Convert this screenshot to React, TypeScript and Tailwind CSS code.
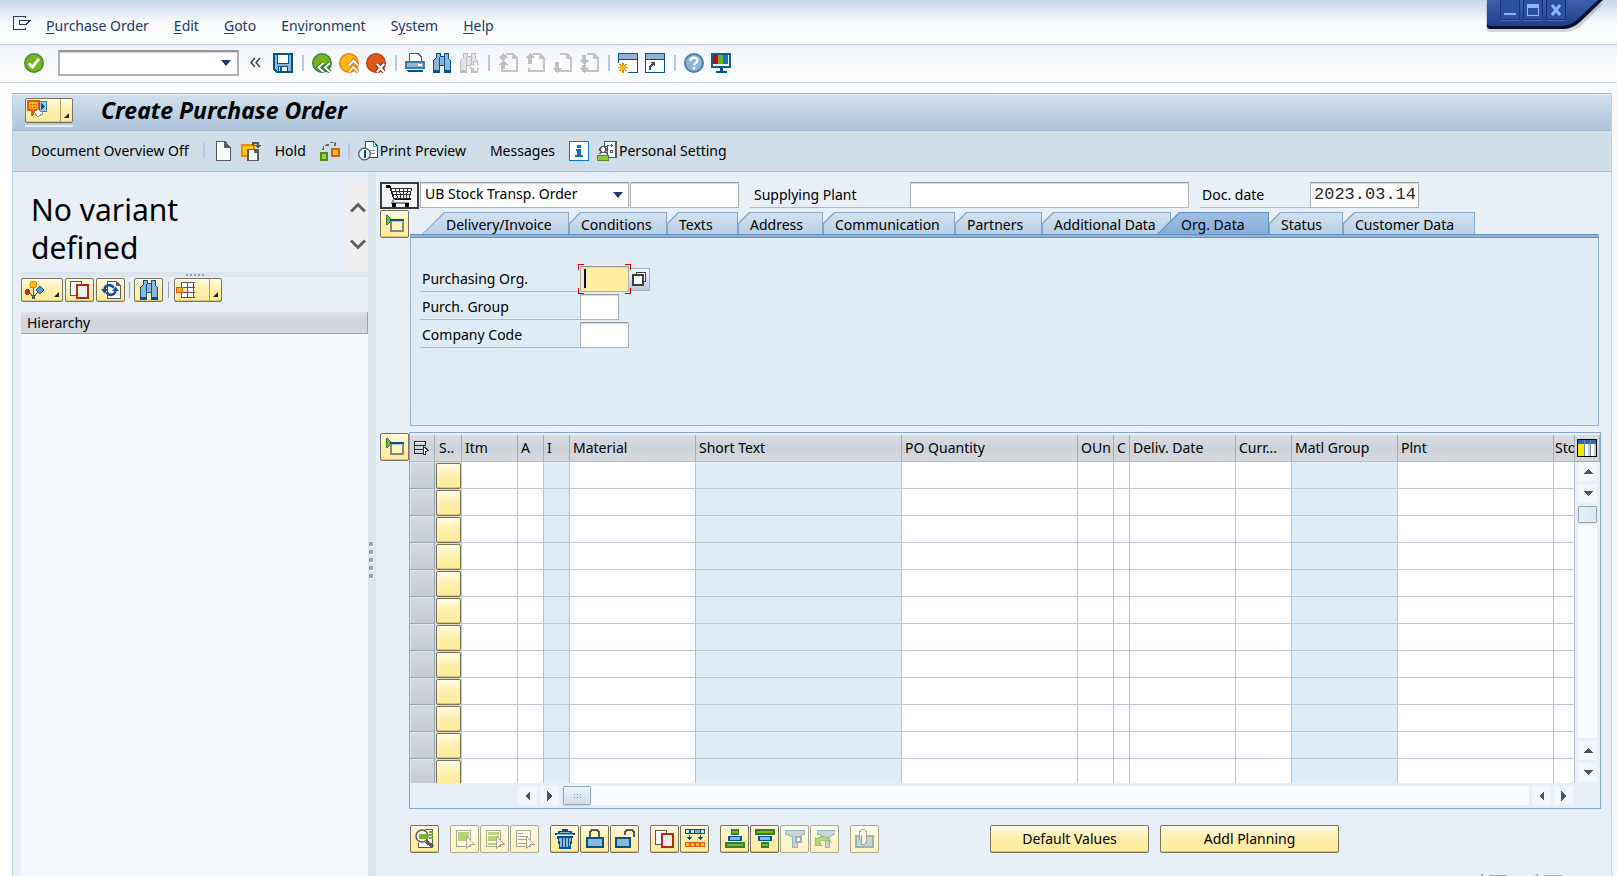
import React from 'react';

type IconProps = { children: React.ReactNode; smooth?: boolean; faded?: boolean };

function Icon({ children, smooth, faded }: IconProps) {
  return (
    <svg
      viewBox="0 0 20 20"
      className={faded ? 'size-5 shrink-0 opacity-50' : 'size-5 shrink-0'}
      shapeRendering={smooth ? 'auto' : 'crispEdges'}
      fill="none"
      aria-hidden="true"
    >
      {children}
    </svg>
  );
}

const BLUE = '#00568c';
const SKY = '#91b5d8';
const INK = '#5a5a5a';

/* ---------- system toolbar icons ---------- */

const OkIcon = () => (
  <Icon smooth>
    <circle cx="10" cy="10" r="9.2" fill="#76b31c" stroke="#4a8f3a" strokeWidth="1.6" />
    <path d="M4.8 10.4l3.6 3.8 6.6-8.4" stroke="#fff" strokeWidth="2.8" />
  </Icon>
);
const SaveIcon = () => (
  <Icon>
    <path d="M1 1h18v18H4l-3-3z" fill={SKY} stroke={BLUE} strokeWidth="1.5" />
    <rect x="4.5" y="1" width="11" height="9" fill="#fff" stroke={BLUE} />
    <rect x="5.5" y="13.5" width="9" height="5" fill="#fff" stroke={BLUE} />
    <rect x="7" y="14" width="2" height="5" fill={BLUE} />
  </Icon>
);
const BackIcon = () => (
  <Icon smooth>
    <circle cx="10" cy="10" r="9.2" fill="#76b31c" stroke="#3c8540" strokeWidth="1.6" />
    <path d="M11.5 10l-5 4.5 5 4.5M18 10l-5 4.5 5 4.5" stroke="#2f7434" strokeWidth="4" />
    <path d="M11.5 10l-5 4.5 5 4.5M18 10l-5 4.5 5 4.5" stroke="#fff" strokeWidth="2" />
  </Icon>
);
const ExitIcon = () => (
  <Icon smooth>
    <circle cx="10" cy="10" r="9.2" fill="#fdbb12" stroke="#e98300" strokeWidth="1.6" />
    <path d="M10 12.5l4.5-5 4.5 5M10 19l4.5-5 4.5 5" stroke="#e0700a" strokeWidth="4" />
    <path d="M10 12.5l4.5-5 4.5 5M10 19l4.5-5 4.5 5" stroke="#fff" strokeWidth="2" />
  </Icon>
);
const CancelIcon = () => (
  <Icon smooth>
    <circle cx="10" cy="10" r="9.2" fill="#da5a1b" stroke="#b8431c" strokeWidth="1.6" />
    <path d="M11 11l7 8M18 11l-7 8" stroke="#a62f16" strokeWidth="4.5" />
    <path d="M11 11l7 8M18 11l-7 8" stroke="#fff" strokeWidth="2.2" />
  </Icon>
);
const PrintIcon = () => (
  <Icon>
    <path d="M4.5 9V.5H13L16.5 4V9" fill="#fff" stroke={INK} />
    <rect x="1" y="9" width="18" height="6" fill={SKY} stroke="#3c7cae" strokeWidth="1.5" />
    <rect x="13" y="11" width="4" height="2" fill="#fff" />
    <path d="M2 17h16v2H3z" fill={BLUE} />
  </Icon>
);
const Binoculars = ({ dark, light }: { dark: string; light: string }) => (
  <>
    <path d="M4 .5h4v3h4v-3h4V5l2.500 2.500V19h-6v-7h-5v7h-6V7.500L4 5z" fill={light} stroke={dark} />
    <path d="M7.500 4v8M12.500 4v8" stroke={dark} />
    <path d="M2 17.500h5M13 17.500h5" stroke={dark} strokeWidth="2" />
  </>
);
const FindIcon = () => (
  <Icon>
    <Binoculars dark={BLUE} light={SKY} />
  </Icon>
);
const FindNextIcon = () => (
  <Icon>
    <Binoculars dark="#bdbdbd" light="#e3e3e3" />
    <path d="M11 11h3V8h4v3h2v4h-2v3h-4v-3h-3z" fill="#f5f5f5" stroke="#bdbdbd" />
  </Icon>
);
const PageIcon = ({ dir }: { dir: 'first' | 'up' | 'down' | 'last' }) => (
  <Icon>
    <path d="M8 1h7l4 4v13H4v-3M15 1v4h4" stroke="#c4c4c4" strokeWidth="1.5" fill="#fafafa" />
    {dir === 'first' && <path d="M5 0L0 5h3v2h4V5h3zM5 7l-5 5h3v4h4v-4h3z" fill="#c0c0c0" />}
    {dir === 'up' && <path d="M5 0L0 5h3v6h4V5h3z" fill="#c0c0c0" />}
    {dir === 'down' && <path d="M5 20L0 15h3V9h4v6h3z" fill="#c0c0c0" />}
    {dir === 'last' && <path d="M5 12L0 7h3V2h4v5h3zM5 20L0 15h3v-3h4v3h3z" fill="#c0c0c0" />}
  </Icon>
);
const WindowBase = () => (
  <>
    <rect x=".5" y=".5" width="19" height="19" fill="#fff" stroke={BLUE} />
    <rect x="1" y="1" width="18" height="5" fill={SKY} />
    <path d="M0 6.5h20" stroke={BLUE} />
  </>
);
const SessionIcon = () => (
  <Icon>
    <WindowBase />
    <path d="M0 10h10v10H0z" fill="#fff" />
    <path d="M5 9.5v10M0 14.5h10M1.500 11l7 7M8.500 11l-7 7" stroke="#ee8a00" strokeWidth="1.500" />
    <circle cx="5" cy="14.5" r="3" fill="#fdb913" />
  </Icon>
);
const ShortcutIcon = () => (
  <Icon>
    <WindowBase />
    <path d="M5 17c0-4 1-6 4-6" stroke="#4a4a4a" strokeWidth="2" />
    <path d="M5 9h5v5z" fill="#4a4a4a" />
  </Icon>
);
const HelpIcon = () => (
  <Icon smooth>
    <circle cx="10" cy="10" r="9" fill="#8fb4d9" stroke="#4a80ae" strokeWidth="2" />
    <path d="M6.5 8c0-4.500 7-4.500 7-.5 0 2.500-3.500 2.300-3.500 5" stroke="#fff" strokeWidth="2.2" />
    <rect x="8.8" y="14" width="2.4" height="2.4" fill="#fff" />
  </Icon>
);
const LayoutIcon = () => (
  <Icon>
    <rect x="1" y="1" width="18" height="13" fill="#fff" stroke="#0b6196" strokeWidth="1.5" />
    <rect x="2" y="2" width="5" height="9" fill="#d4000f" />
    <rect x="7" y="2" width="5" height="9" fill="#6eb41c" />
    <rect x="12" y="2" width="5" height="9" fill="#0a7ac8" />
    <path d="M9 15h3v3h4v2H5v-2h4z" fill={BLUE} />
  </Icon>
);

/* ---------- application toolbar icons ---------- */

const ServicesIcon = () => (
  <Icon>
    <path d="M1 1h11v8l-4 1-3 6V10H1z" fill="#fdb913" stroke="#e2571c" strokeWidth="1.5" />
    <path d="M3 4.500h7M3 7.500h7" stroke="#e2571c" strokeDasharray="2 1" />
    <rect x="12.5" y="1.5" width="7" height="10" fill="#a9c8e4" stroke="#337ab0" />
    <path d="M14 3l4 3.500-4 3.500z" fill="#00568c" />
    <path d="M7 12l4-3 4 3v2l-4 3z" fill="#fff" stroke="#8a8a8a" />
  </Icon>
);
const NewIcon = () => (
  <Icon>
    <path d="M3.5.5h8.500l5 5.500v13.500H3.500z" fill="#fff" stroke={INK} />
    <path d="M11 0v7h7z" fill={INK} />
  </Icon>
);
const OtherOrderIcon = () => (
  <Icon>
    <rect x="1" y="4" width="12" height="11" fill="#fdc913" stroke="#ee8a00" strokeWidth="2" />
    <path d="M7 8.5h10v11H7z" fill="#fff" stroke={INK} strokeWidth="1.5" />
    <path d="M13 8h5v4h-5z" fill={INK} />
    <path d="M12 5V2h5v2" stroke={INK} strokeWidth="1.5" />
    <path d="M13 4h7l-3.500 3.500z" fill={INK} />
  </Icon>
);
const CheckIcon = () => (
  <Icon>
    <rect x="1" y="12" width="6" height="7" fill="#9fd22c" stroke="#4b8c25" strokeWidth="2" />
    <rect x="12" y="8" width="7" height="7" fill="#fdc913" stroke="#dd5a16" strokeWidth="2" />
    <path d="M3 9c0-4 2-5 6-5M15 5V1.500h-5" stroke="#6a6a6a" strokeWidth="1.500" strokeDasharray="4 1" />
  </Icon>
);
const PreviewIcon = () => (
  <Icon>
    <path d="M7.500.5h8l4 4.500v11.500h-12z" fill="#fff" stroke={BLUE} />
    <path d="M15.500 1v4.500h4M12 9.500h5M12 12.500h5" stroke="#5f94bf" />
    <circle cx="6.5" cy="13" r="5.8" fill="#e9f1f7" stroke={INK} strokeWidth="1.300" shapeRendering="auto" />
    <path d="M6.500 9v8" stroke={BLUE} strokeWidth="2" />
  </Icon>
);
const InfoIcon = () => (
  <Icon>
    <rect x=".5" y=".5" width="19" height="19" fill="#fff" stroke="#0a7ac8" strokeWidth="1.5" />
    <path d="M8 4h4v3H8zM7 8h5v6h2v2H6v-2h2v-4H7z" fill="#0a72b8" />
  </Icon>
);
const PersonIcon = () => (
  <Icon>
    <path d="M7.500.5h12v16h-9V5h-3z" fill="#fff" stroke={INK} />
    <path d="M19 1v16" stroke={INK} strokeWidth="2" />
    <path d="M10 4.500h2M13 4.500h3M14.500 3v3M13.500 9.500h2v2h-2z" stroke={INK} />
    <circle cx="6" cy="8.5" r="3" fill="#fff" stroke={INK} strokeWidth="1.5" />
    <path d="M2 13l3-2h3l3 2" stroke={INK} fill="#fff" />
    <path d="M.500 14.500h11v5H.500z" fill="#8cc832" stroke="#4b8c25" />
  </Icon>
);

/* ---------- panel icons ---------- */

const NodesIcon = () => (
  <Icon>
    <path d="M3 12c3 0 6 3 6 7M16 12c-3 0-6 3-6 7M9.500 5v14" stroke={INK} />
    <circle cx="9.5" cy="4.5" r="3.5" fill="#fdb913" stroke="#ee8a00" />
    <circle cx="3.5" cy="12" r="2.5" fill="#d8331c" stroke="#a62f16" />
    <path d="M16 6l4 4-4 4-4-4z" fill="#5f9cc8" stroke={BLUE} />
  </Icon>
);
const CopyIcon = () => (
  <Icon>
    <path d="M.5 1.500h11v14H.500z" fill="#fff" stroke={INK} />
    <rect x="7" y="4.5" width="11" height="13" fill="#eee" stroke="#b42a14" strokeWidth="2" />
  </Icon>
);
const RefreshIcon = () => (
  <Icon>
    <path d="M6.500 1.500h9l4 4v13h-13z" fill="#fff" stroke={INK} />
    <path d="M15 1v5h5z" fill={INK} />
    <g shapeRendering="auto">
      <path d="M3.500 10c0-5.500 7-6.500 9-2M14.500 10c0 5.500-7 6.500-9 2" stroke="#1d4f9c" strokeWidth="2.500" />
      <path d="M0 9h7l-3.500 4.500zM11 11h7l-3.500-4.500z" fill="#1d4f9c" />
    </g>
  </Icon>
);
const GridIcon = () => (
  <Icon>
    <path d="M5.500 2v5M5.500 13v5M5 2.500h14M5 7.500h14M5 12.500h14M5 17.500h14M11.500 2v16M17.500 2v16" stroke={INK} />
    <path d="M6 3h5v4H6zM12 3h5v4h-5zM12 8h5v4h-5zM6 13h5v4H6zM12 13h5v4h-5z" fill="#fff" />
    <rect x=".5" y="7.500" width="6" height="5" fill="#fdb913" stroke="#e2571c" />
  </Icon>
);
const CartIcon = () => (
  <svg viewBox="0 0 30 22" className="h-[22px] w-[30px]" shapeRendering="crispEdges" fill="none" aria-hidden="true">
    <path d="M1 2h4l4 12h17" stroke="#000" strokeWidth="1.5" />
    <rect x="1" y="0" width="4" height="3" fill="#000" />
    <path d="M6 3h21l-3 10H9z" fill="#fff" stroke="#333" />
    <path d="M10.500 3l2 10M14.500 3l1 10M18.500 3v10M22.500 3l-1 10M7 6.500h19M8 9.500h17" stroke="#333" />
    <path d="M9 14l-2 4h17" stroke="#8a8a8a" strokeWidth="1.5" />
    <rect x="7" y="18" width="4" height="4" fill="#000" />
    <rect x="20" y="18" width="4" height="4" fill="#000" />
  </svg>
);
const ExpandIcon = () => (
  <Icon>
    <path d="M1.500 1.500h1l4 4v1l-4 4h-1z" fill="#7ab82a" stroke="#3c7c2c" />
    <path d="M6 6h12v11H6z" fill="#fff3b8" stroke="#858585" strokeWidth="1.5" />
    <path d="M5 6h14" stroke={BLUE} strokeWidth="2" />
    <path d="M7 7.500h11" stroke="#a9c8e4" />
  </Icon>
);
const SelectAllIcon = () => (
  <svg viewBox="0 0 16 16" className="size-4" shapeRendering="crispEdges" fill="none" aria-hidden="true">
    <path d="M.5 1.500h11v4H.500zM.500 5.500v8H9M.500 9.500H9" stroke="#2b2b45" />
    <path d="M1 2h10v1H1z" fill="#fff" />
    <path d="M9.500 6.500l5 4-3 1v3h-2z" fill="#fff" stroke="#2b2b45" />
  </svg>
);
const ConfigIcon = () => (
  <svg viewBox="0 0 20 18" className="h-[18px] w-5" shapeRendering="crispEdges" aria-hidden="true">
    <rect x="0" y="0" width="20" height="18" fill="#000" />
    <rect x="1" y="1" width="18" height="16" fill="#fff" />
    <rect x="1" y="1" width="18" height="4" fill="#1e6fc0" />
    <rect x="1" y="5" width="6" height="12" fill="#ffe600" />
    <path d="M7 1h1v16H7zM13 1h1v16h-1z" fill="#6d8aa8" />
    <path d="M11 5h2v12h-2zM17 5h2v12h-2z" fill="#c7cdd6" />
  </svg>
);
const MatchesIcon = () => (
  <svg viewBox="0 0 14 14" className="size-3.5" shapeRendering="crispEdges" aria-hidden="true">
    <rect x="4" y="0" width="10" height="10" fill="#3d3d3d" />
    <rect x="5" y="1" width="8" height="8" fill="#fff" />
    <rect x="0" y="2" width="12" height="12" fill="#3d3d3d" />
    <rect x="2" y="4" width="8" height="8" fill="#fff" />
  </svg>
);

/* ---------- item toolbar icons ---------- */

const DetailIcon = () => (
  <Icon>
    <path d="M10 .5h7.500v18H3.500V14" fill="#fff" stroke={INK} />
    <path d="M14 3h4M14 6h4M14 9h4" stroke="#6fb01e" strokeWidth="2" />
    <circle cx="7" cy="7" r="6" fill="#fff" stroke={INK} strokeWidth="1.500" shapeRendering="auto" />
    <rect x="4" y="5" width="9" height="5" fill="#7ab82a" />
    <path d="M11 12l7 6" stroke={INK} strokeWidth="3.5" />
  </Icon>
);
const MarkIcon = ({ kind }: { kind: 'all' | 'block' | 'none' }) => (
  <Icon faded>
    <rect x="1.5" y="1.5" width="14" height="16" fill="#fff" stroke={INK} />
    {kind === 'all' && <path d="M3 3h11v9H3z" fill="#6fb01e" />}
    {kind === 'block' && <path d="M3 3h11v3H3zM3 7h11v5H3zM3 14h8v2H3z" fill="#6fb01e" />}
    {kind === 'none' && <path d="M3 4.500h5M3 7.500h10M3 10.500h10M3 14.500h8" stroke={INK} />}
    <path d="M11.500 7.500l8 8-4 .5-4 3.500z" fill="#fff" stroke={INK} />
  </Icon>
);
const TrashIcon = () => (
  <Icon>
    <path d="M7 0h6v2h4v2h3v2H0V4h3V2h4z" fill={BLUE} />
    <path d="M5 3h10M2 5h16" stroke={SKY} />
    <path d="M3 8h14l-2 11H5z" fill={SKY} stroke={BLUE} strokeWidth="1.5" />
    <path d="M7.500 9v9M10.500 9v9M13.500 9v9" stroke={BLUE} />
  </Icon>
);
const LockIcon = ({ open }: { open?: boolean }) => (
  <Icon>
    {open ? (
      <path d="M10 6V3l2-2h5l2 2v5" stroke={INK} strokeWidth="2" />
    ) : (
      <path d="M5 8V3l2-2h5l2 2v5" stroke={INK} strokeWidth="2" />
    )}
    <path d={open ? 'M1 9h14v9H1z' : 'M2 9h16v9H2z'} fill={SKY} stroke={BLUE} strokeWidth="1.5" />
  </Icon>
);
const RowsIcon = () => (
  <Icon>
    <rect x="0" y="0" width="20" height="5" fill={BLUE} />
    <path d="M1 1h3v3H1zM6 1h3v3H6zM16 1h3v3h-3z" fill="#cfe2f2" />
    <rect x="10" y="1" width="5" height="3" fill="#9b9b9b" />
    <path d="M2 8h5l-2.500 3zM13 8h5l-2.500 3z" fill={BLUE} />
    <path d="M4.500 6v3M15.500 6v3" stroke={BLUE} />
    <rect x="0" y="13" width="20" height="5" fill="#e2571c" />
    <path d="M1 14h3v3H1zM6 14h3v3H6zM11 14h3v3h-3zM16 14h3v3h-3z" fill="#fdc913" />
  </Icon>
);
const SortIcon = ({ down }: { down?: boolean }) => (
  <Icon>
    <rect x={down ? 1 : 6.5} y="1" width={down ? 18 : 7} height="4" fill="#7ab82a" stroke="#3c7c2c" strokeWidth="1.5" />
    <rect x="4" y="7.5" width="12" height="4" fill={SKY} stroke={BLUE} strokeWidth="1.5" />
    <rect x={down ? 6.5 : 1} y="14" width={down ? 7 : 18} height="4" fill="#7ab82a" stroke="#3c7c2c" strokeWidth="1.5" />
  </Icon>
);
const FilterIcon = () => (
  <Icon faded>
    <path d="M.500 1h19v4l-7 3v10h-5V8l-7-3z" fill={SKY} stroke="#2f76ab" />
    <rect x="11" y="8" width="5" height="5" fill="#fff" stroke="#2f76ab" strokeWidth="1.500" />
  </Icon>
);
const FilterOffIcon = () => (
  <Icon faded>
    <path d="M2 1h18v4l-6 3v10h-4V8L2 5z" fill={SKY} stroke="#2f76ab" />
    <path d="M0 8v8h6l-2-3c3-2 8-2 12 0-3-6-10-7-14-3z" fill="#7ab82a" stroke="#3c7c2c" />
  </Icon>
);
const AttachIcon = () => (
  <Icon faded>
    <path d="M1 7h17v11H1z" fill={SKY} stroke="#2f76ab" strokeWidth="1.5" />
    <path d="M4.500 11V3l2-2.500h3l2 2.500v10l-2 2.500h-3v-10" stroke={INK} fill="#e8eff6" />
  </Icon>
);

/* ---------- building blocks ---------- */

const yellow =
  'flex items-center justify-center rounded-[2px] border border-[#77735f] bg-linear-to-b from-[#fffbe3] via-[#ffefaa] to-[#ffeb9b] shadow-[inset_0_-1px_0_#d8c67c]';
const yellowFaded =
  'flex items-center justify-center rounded-[2px] border border-[#aaa892] bg-linear-to-b from-[#fffdf0] via-[#fff6cd] to-[#fdf2c4]';
const field =
  'rounded-[1px] border border-[#adb1b3] border-t-[#96989a] bg-white shadow-[inset_0_2px_1px_-1px_#d4d6da] outline-none';

const Sep = () => <span className="ml-0.5 mr-px h-4 w-0.5 bg-[#b4cbe2]" />;
const Corner = () => (
  <span className="border-b-[5px] border-l-[5px] border-b-[#222] border-l-transparent" />
);

function ToolButton({ label, children }: { label: string; children: React.ReactNode }) {
  return (
    <button type="button" aria-label={label}>
      {children}
    </button>
  );
}

function Arrow({ dir, label }: { dir: 'up' | 'down' | 'left' | 'right'; label: string }) {
  const paths = {
    up: 'M5 2l5 5H0z',
    down: 'M5 7l5-5H0z',
    left: 'M2 5l5-5v10z',
    right: 'M7 5L2 0v10z',
  };
  return (
    <button type="button" aria-label={label} className="flex h-[19px] w-[19px] shrink-0 items-center justify-center bg-[#f3f6fa]">
      <svg viewBox="0 0 10 10" className="size-2.5" shapeRendering="crispEdges" aria-hidden="true">
        <path d={paths[dir]} fill="#43586c" />
      </svg>
    </button>
  );
}

/* ---------- page sections ---------- */

const menus: [string, string, string][] = [
  ['', 'P', 'urchase Order'],
  ['', 'E', 'dit'],
  ['', 'G', 'oto'],
  ['En', 'v', 'ironment'],
  ['S', 'y', 'stem'],
  ['', 'H', 'elp'],
];

function WindowControls() {
  const button =
    'flex h-5 w-5 items-center justify-center rounded-b-[2px] border border-t-0 border-[#16307a] bg-[#2c4fa0] shadow-[0_1px_0_#4a6cc0]';
  return (
    <div className="absolute right-[13px] top-0 h-[34px] w-[118px]">
      <svg viewBox="0 0 118 34" className="absolute inset-0 h-full w-full" aria-hidden="true">
        <defs>
          <linearGradient id="cap" x1="0" y1="0" x2="0" y2="1">
            <stop offset="0" stopColor="#3c60ae" />
            <stop offset="1" stopColor="#213f86" />
          </linearGradient>
        </defs>
        <path d="M0 4h117L97 24q-8 8-18 8H4q-4 0-4-4z" fill="#000" opacity=".15" />
        <path d="M1 0h116L94 22q-8 7-16 7H4q-3 0-3-3z" fill="#06102e" />
        <path d="M1 0h111L92 19q-8 7-16 7H5q-4 0-4-3z" fill="url(#cap)" />
      </svg>
      <div className="relative ml-3.5 flex gap-[3px]">
        <button type="button" aria-label="Minimize" className={button}>
          <svg viewBox="0 0 12 12" className="size-3" aria-hidden="true">
            <path d="M0 9h12v2H0z" fill="#8fb4ff" />
          </svg>
        </button>
        <button type="button" aria-label="Maximize" className={button}>
          <svg viewBox="0 0 12 12" className="size-3" shapeRendering="crispEdges" aria-hidden="true">
            <path d="M0 0h12v12H0zM1 4v7h10V4z" fillRule="evenodd" fill="#8fb4ff" />
          </svg>
        </button>
        <button type="button" aria-label="Close" className={button}>
          <svg viewBox="0 0 12 12" className="size-3" aria-hidden="true">
            <path d="M2 1l8 10M10 1L2 11" stroke="#8fb4ff" strokeWidth="3" />
          </svg>
        </button>
      </div>
    </div>
  );
}

function MenuBar() {
  return (
    <nav className="flex h-[45px] items-center border-b border-[#bdc9da] bg-linear-to-b from-[#c7d5e8] via-[#f8fafc] via-50% to-white pl-[13px] pt-2 text-[#22376a]">
      <button type="button" aria-label="Menu" className="mr-[15px] pb-1.5">
        <svg viewBox="0 0 18 14" className="h-3.5 w-[18px]" fill="none" shapeRendering="crispEdges" aria-hidden="true">
          <path d="M12.500 2V.5H.5v13h12V12" stroke="#22376a" />
          <path d="M6.500 4.500h10.500L13 8.500H6.500z" stroke="#22376a" />
        </svg>
      </button>
      <ul className="flex gap-[25px]">
        {menus.map(([a, b, c]) => (
          <li key={a + b + c}>
            <button type="button">
              {a}
              <span className="underline underline-offset-2">{b}</span>
              {c}
            </button>
          </li>
        ))}
      </ul>
    </nav>
  );
}

function SystemToolbar() {
  return (
    <div className="flex h-[38px] items-center gap-[7px] border-b border-[#c9d0de] bg-linear-to-b from-[#f0f4fa] to-white pb-0.5 pl-6">
      <ToolButton label="Enter"><OkIcon /></ToolButton>
      <div className="relative ml-[7px]">
        <select aria-label="Command field" className={`${field} block h-[26px] w-[181px] appearance-none border-2`}>
          <option></option>
        </select>
        <svg viewBox="0 0 10 6" className="pointer-events-none absolute right-2 top-2.5 h-1.5 w-2.5" aria-hidden="true">
          <path d="M0 0h10L5 6z" fill="#22376a" />
        </svg>
      </div>
      <button type="button" aria-label="Collapse" className="ml-1 mr-[5px]">
        <svg viewBox="0 0 11 11" className="size-[11px]" fill="none" stroke="#444" strokeWidth="1.5" aria-hidden="true">
          <path d="M5 1L1 5.500 5 10M10 1L6 5.500 10 10" />
        </svg>
      </button>
      <ToolButton label="Save"><SaveIcon /></ToolButton>
      <Sep />
      <ToolButton label="Back"><BackIcon /></ToolButton>
      <ToolButton label="Exit"><ExitIcon /></ToolButton>
      <ToolButton label="Cancel"><CancelIcon /></ToolButton>
      <Sep />
      <ToolButton label="Print"><PrintIcon /></ToolButton>
      <ToolButton label="Find"><FindIcon /></ToolButton>
      <ToolButton label="Find next"><FindNextIcon /></ToolButton>
      <Sep />
      <ToolButton label="First page"><PageIcon dir="first" /></ToolButton>
      <ToolButton label="Previous page"><PageIcon dir="up" /></ToolButton>
      <ToolButton label="Next page"><PageIcon dir="down" /></ToolButton>
      <ToolButton label="Last page"><PageIcon dir="last" /></ToolButton>
      <Sep />
      <ToolButton label="New session"><SessionIcon /></ToolButton>
      <ToolButton label="Create shortcut"><ShortcutIcon /></ToolButton>
      <Sep />
      <ToolButton label="Help"><HelpIcon /></ToolButton>
      <ToolButton label="Customize layout"><LayoutIcon /></ToolButton>
    </div>
  );
}

function TitleBar() {
  return (
    <header className="flex h-[38px] items-center border-y border-b-[#a3b8cf] border-t-[#9dadc4] bg-linear-to-b from-[#d2e1ed] to-[#adc4dc] pl-3 shadow-[inset_0_1px_0_#e8f0f6]">
      <div className="border-b-2 border-[#e9f1f7] pb-0.5">
        <button type="button" aria-label="Services for object" className={`${yellow} h-[25px] w-12 !justify-start pl-px`}>
          <ServicesIcon />
          <span className="ml-auto flex h-full w-3 items-end justify-end border-l border-[#a89f70] p-1 pr-[3px]">
            <Corner />
          </span>
        </button>
      </div>
      <h1 className="ml-7 pb-1 font-['Noto_Sans',sans-serif] text-[23px] font-bold italic leading-7 text-black">
        Create Purchase Order
      </h1>
    </header>
  );
}

function AppToolbar() {
  return (
    <div className="flex h-[41px] items-center border-b border-[#a9bccc] bg-[#cfdde8] pl-[18px] text-black">
      <button type="button">Document Overview Off</button>
      <span className="ml-3.5 mr-2 h-4 w-0.5 bg-[#b0cae2]" />
      <ToolButton label="Create"><NewIcon /></ToolButton>
      <span className="w-2" />
      <ToolButton label="Other purchase order"><OtherOrderIcon /></ToolButton>
      <button type="button" className="mx-3.5">Hold</button>
      <ToolButton label="Check"><CheckIcon /></ToolButton>
      <span className="mx-2 h-4 w-0.5 bg-[#b0cae2]" />
      <button type="button" className="flex items-center gap-0.5"><PreviewIcon />Print Preview</button>
      <button type="button" className="ml-6 mr-3.5">Messages</button>
      <ToolButton label="Information"><InfoIcon /></ToolButton>
      <button type="button" className="ml-2 flex items-center gap-0.5"><PersonIcon />Personal Setting</button>
    </div>
  );
}

function OverviewPane() {
  return (
    <aside className="flex w-[355px] shrink-0 flex-col pl-2">
      <div className="flex h-[100px] justify-between">
        <p className="w-60 pl-2.5 pt-[19px] text-[30px] leading-[38px]">No variant defined</p>
        <div className="mt-2 flex w-[21px] flex-col items-center gap-[26px] bg-[#efefef] pt-[21px]">
          <button type="button" aria-label="Scroll up">
            <svg viewBox="0 0 16 12" className="h-3 w-4" fill="none" aria-hidden="true">
              <path d="M1 10.500l7-7 7 7" stroke="#606060" strokeWidth="3" />
            </svg>
          </button>
          <button type="button" aria-label="Scroll down">
            <svg viewBox="0 0 16 12" className="h-3 w-4" fill="none" aria-hidden="true">
              <path d="M1 1.500l7 7 7-7" stroke="#606060" strokeWidth="3" />
            </svg>
          </button>
        </div>
      </div>
      <div className="flex h-[5px] items-center justify-center gap-0.5 bg-[#dbe5eb]">
        {[0, 1, 2, 3, 4].map((i) => (
          <span key={i} className="h-0.5 w-0.5 bg-[#93a3b3]" />
        ))}
      </div>
      <div className="flex items-center gap-0.5 pt-px">
        <button type="button" aria-label="Select variant" className={`${yellow} h-6 w-[42px] !justify-start pl-0.5`}>
          <NodesIcon />
          <span className="ml-auto flex self-end p-1 pr-[3px]"><Corner /></span>
        </button>
        <button type="button" aria-label="Copy" className={`${yellow} h-6 w-[29px]`}><CopyIcon /></button>
        <button type="button" aria-label="Refresh" className={`${yellow} h-6 w-[29px]`}><RefreshIcon /></button>
        <span className="mx-0.5 h-4 w-px bg-[#9aa2aa]" />
        <button type="button" aria-label="Find" className={`${yellow} h-6 w-[29px]`}><FindIcon /></button>
        <span className="mx-[3px] h-4 w-px bg-[#9aa2aa]" />
        <button type="button" aria-label="Layout" className={`${yellow} h-6 w-12 !justify-start pl-px`}>
          <GridIcon />
          <span className="ml-auto flex h-full w-3 items-end justify-end border-l border-[#a89f70] p-1 pr-[3px]">
            <Corner />
          </span>
        </button>
      </div>
      <h2 className="mt-2.5 h-[22px] border-b border-r border-[#9ba3ad] bg-linear-to-b from-[#dde0e5] via-[#cfd3da] to-[#d4d8de] pl-1.5 leading-[21px]">
        Hierarchy
      </h2>
      <div className="flex-1 bg-[#f6faff]" />
    </aside>
  );
}

const tabs: { label: string; width: string; wide?: boolean; active?: boolean }[] = [
  { label: 'Delivery/Invoice', width: 'w-[147px]', wide: true },
  { label: 'Conditions', width: 'w-[98px]' },
  { label: 'Texts', width: 'w-[71px]' },
  { label: 'Address', width: 'w-[85px]' },
  { label: 'Communication', width: 'w-[132px]' },
  { label: 'Partners', width: 'w-[87px]' },
  { label: 'Additional Data', width: 'w-[129px]' },
  { label: 'Org. Data', width: 'w-[112px] -ml-[14px]', wide: true, active: true },
  { label: 'Status', width: 'w-[74px]' },
  { label: 'Customer Data', width: 'w-[132px]' },
];

function TabStrip() {
  return (
    <div role="tablist" className="flex h-[22px] pl-3">
      {tabs.map((t) => {
        const cut = t.wide
          ? '[clip-path:polygon(22px_0,100%_0,100%_100%,0_100%)]'
          : '[clip-path:polygon(11px_0,100%_0,100%_100%,0_100%,0_11px)]';
        return (
          <button
            key={t.label}
            type="button"
            role="tab"
            aria-selected={Boolean(t.active)}
            className={`${t.width} ${cut} ${t.active ? 'bg-[#5f8dbd]' : 'bg-[#86a6c8]'} relative flex shrink-0`}
          >
            <span
              className={`${cut} ${
                t.active ? 'from-[#9dbfe2] to-[#86add9]' : 'from-[#d2e2ef] to-[#b9d0e7]'
              } ${t.wide ? 'pl-[23px]' : 'pl-[11px]'} mx-px mt-px h-[21px] w-full whitespace-nowrap bg-linear-to-b text-left leading-[23px]`}
            >
              {t.label}
            </span>
          </button>
        );
      })}
    </div>
  );
}

function FormRow({ id, label, children }: { id: string; label: string; children: React.ReactNode }) {
  return (
    <div className="flex h-[26px] items-stretch">
      <label htmlFor={id} className="w-40 border-b border-[#b4b8ba] pl-0.5 leading-[26px]">
        {label}
      </label>
      {children}
    </div>
  );
}

function OrgDataPanel() {
  return (
    <div className="min-w-0 flex-1 pt-0.5">
      <TabStrip />
      <div className="h-1 rounded-tr-[2px] border-y border-[#6791bd] bg-[#8fb4dc]" />
      <div className="flex h-[188px] flex-col gap-0.5 border border-t-0 border-[#93b0d0] bg-[#dfebf5] pl-[9px] pt-[28px]">
        <FormRow id="porg" label="Purchasing Org.">
          <div className="relative flex items-center">
            <input id="porg" className={`${field} h-[26px] w-[49px] !bg-[#ffee9e] pl-1`} />
            <span className="pointer-events-none absolute left-1 top-[3px] h-[19px] w-0.5 bg-[#001060]" />
            <span className="pointer-events-none absolute -left-0.5 -top-0.5 size-1.5 border-l border-t border-[#e2000f]" />
            <span className="pointer-events-none absolute -bottom-0.5 -left-0.5 size-1.5 border-b border-l border-[#e2000f]" />
            <span className="pointer-events-none absolute -top-0.5 left-[45px] size-1.5 border-r border-t border-[#e2000f]" />
            <span className="pointer-events-none absolute -bottom-0.5 left-[45px] size-1.5 border-b border-r border-[#e2000f]" />
            <button
              type="button"
              aria-label="Possible entries"
              className="flex h-[23px] w-[21px] items-center border border-l-0 border-[#a9adb3] bg-linear-to-b from-[#f4f7fb] to-[#b9cbe2] pl-[3px]"
            >
              <MatchesIcon />
            </button>
          </div>
        </FormRow>
        <FormRow id="pgrp" label="Purch. Group">
          <input id="pgrp" className={`${field} w-[39px] px-1`} />
        </FormRow>
        <FormRow id="ccode" label="Company Code">
          <input id="ccode" className={`${field} w-[49px] px-1`} />
        </FormRow>
      </div>
    </div>
  );
}

function DocumentHeader() {
  return (
    <div className="flex h-[26px] items-stretch">
      <span className="flex h-[27px] w-[39px] shrink-0 items-center justify-center border-2 border-[#3a3a3a] bg-[#f4f7fa]">
        <CartIcon />
      </span>
      <div className="relative ml-px">
        <select aria-label="Order type" className={`${field} h-[26px] w-[209px] appearance-none pb-0.5 pl-1`}>
          <option>UB Stock Transp. Order</option>
        </select>
        <svg viewBox="0 0 10 6" className="pointer-events-none absolute right-[6px] top-2.5 h-1.5 w-2.5" aria-hidden="true">
          <path d="M0 0h10L5 6z" fill="#22376a" />
        </svg>
      </div>
      <input aria-label="Order number" className={`${field} ml-px w-[109px] px-1`} />
      <label htmlFor="splant" className="ml-[11px] w-40 border-b border-[#b4b8ba] pl-1 leading-[26px]">
        Supplying Plant
      </label>
      <input id="splant" className={`${field} w-[279px] px-1`} />
      <label htmlFor="ddate" className="ml-[11px] w-[110px] border-b border-[#b4b8ba] pl-0.5 leading-[26px]">
        Doc. date
      </label>
      <input
        id="ddate"
        defaultValue="2023.03.14"
        className={`${field} w-[109px] pl-[3px] font-['Liberation_Mono',monospace] text-[17px] text-[#2a2a2a]`}
      />
    </div>
  );
}

const columns: { label: string; width: string; shaded?: boolean }[] = [
  { label: 'Itm', width: 'w-14' },
  { label: 'A', width: 'w-[26px]' },
  { label: 'I', width: 'w-[26px]', shaded: true },
  { label: 'Material', width: 'w-[126px]' },
  { label: 'Short Text', width: 'w-[206px]', shaded: true },
  { label: 'PO Quantity', width: 'w-44' },
  { label: 'OUn', width: 'w-9' },
  { label: 'C', width: 'w-4' },
  { label: 'Deliv. Date', width: 'w-[106px]' },
  { label: 'Curr...', width: 'w-14' },
  { label: 'Matl Group', width: 'w-[106px]', shaded: true },
  { label: 'Plnt', width: 'w-[156px]' },
  { label: 'Sto', width: '' },
];

const rowNumbers = Array.from({ length: 12 }, (_, i) => i + 1);

function ItemTable() {
  const th =
    'h-[27px] overflow-hidden whitespace-nowrap border-b border-b-[#b3bdc9] border-r border-r-[#9fabb7] bg-linear-to-b from-[#dadde2] via-[#cdd2da] to-[#d6dade] p-0 text-left font-normal';
  return (
    <div className="mr-2.5 min-w-0 flex-1 border border-[#86a5c8] bg-[#e8eff6] pt-0.5">
      <div className="flex">
        <div className="h-[348px] min-w-0 flex-1 overflow-hidden">
          <table className="w-full table-fixed border-separate border-spacing-0">
            <colgroup>
              <col className="w-[25px]" />
              <col className="w-[27px]" />
              {columns.map((c) => (
                <col key={c.label} className={c.width} />
              ))}
            </colgroup>
            <thead>
              <tr>
                <th className={th}>
                  <button type="button" aria-label="Select all" className="ml-1 block"><SelectAllIcon /></button>
                </th>
                <th className={`${th} pl-1`}>S..</th>
                {columns.map((c) => (
                  <th key={c.label} className={`${th} ${c.label === 'Sto' ? 'pl-px' : 'pl-[3px]'}`}>{c.label}</th>
                ))}
              </tr>
            </thead>
            <tbody>
              {rowNumbers.map((n) => (
                <tr key={n}>
                  <td className="h-[27px] border-b border-r border-[#98a6b6] p-0">
                    <button
                      type="button"
                      aria-label={`Select row ${n}`}
                      className="block h-[26px] w-full bg-linear-to-b from-[#d6dae0] to-[#c6cbd3] shadow-[inset_1px_1px_0_#e2e5ea]"
                    />
                  </td>
                  <td className="h-[27px] border-r border-[#bcc6d4] bg-[#dcdcd0] p-0 pl-px">
                    <button type="button" aria-label={`Item status ${n}`} className={`${yellow} h-[26px] w-[25px]`} />
                  </td>
                  {columns.map((c) => (
                    <td
                      key={c.label}
                      className={`h-[27px] border-b border-r border-[#bcc6d4] p-0 ${c.shaded ? 'bg-[#dfebf5]' : 'bg-white'}`}
                    />
                  ))}
                </tr>
              ))}
            </tbody>
          </table>
        </div>
        <div className="flex w-[25px] flex-col items-center">
          <button
            type="button"
            aria-label="Configuration"
            className="flex h-[27px] w-full items-center justify-center border-b border-r border-[#9fabb7] bg-linear-to-b from-[#dadde2] to-[#d0d5dc]"
          >
            <ConfigIcon />
          </button>
          <div className="flex flex-1 flex-col items-center gap-[3px] pb-px">
            <Arrow dir="up" label="Row up" />
            <Arrow dir="down" label="Row down" />
            <div className="w-[19px] flex-1 bg-[#fafbfc]">
              <div className="h-[17px] w-[19px] rounded-[1px] border border-[#9aa8b4] bg-linear-to-r from-[#e9eff5] to-[#dbe6ef] shadow-sm" />
            </div>
            <Arrow dir="up" label="Page up" />
            <Arrow dir="down" label="Page down" />
          </div>
        </div>
      </div>
      <div className="flex h-[25px] items-center gap-[3px] pl-[108px] pr-[27px]">
        <Arrow dir="left" label="Column left" />
        <Arrow dir="right" label="Column right" />
        <div className="ml-px h-[19px] flex-1 bg-[#fafbfc]">
          <div className="flex h-[19px] w-7 items-center justify-center rounded-[1px] border border-[#9aaaba] bg-linear-to-b from-[#eef3f8] to-[#cfdde9] shadow-sm">
            <div className="grid grid-cols-3 gap-0.5">
              {[0, 1, 2, 3, 4, 5].map((i) => (
                <span key={i} className="size-px bg-[#8496a8]" />
              ))}
            </div>
          </div>
        </div>
        <Arrow dir="left" label="Page left" />
        <Arrow dir="right" label="Page right" />
      </div>
    </div>
  );
}

const itemActions: { label: string; icon: React.ReactNode; off?: boolean }[][] = [
  [{ label: 'Details', icon: <DetailIcon /> }],
  [
    { label: 'Select all', icon: <MarkIcon kind="all" />, off: true },
    { label: 'Select block', icon: <MarkIcon kind="block" />, off: true },
    { label: 'Deselect all', icon: <MarkIcon kind="none" />, off: true },
  ],
  [
    { label: 'Delete', icon: <TrashIcon /> },
    { label: 'Lock', icon: <LockIcon /> },
    { label: 'Unlock', icon: <LockIcon open /> },
  ],
  [
    { label: 'Copy', icon: <CopyIcon /> },
    { label: 'Duplicate values', icon: <RowsIcon /> },
  ],
  [
    { label: 'Sort ascending', icon: <SortIcon /> },
    { label: 'Sort descending', icon: <SortIcon down /> },
    { label: 'Filter', icon: <FilterIcon />, off: true },
    { label: 'Remove filter', icon: <FilterOffIcon />, off: true },
  ],
  [{ label: 'Attachments', icon: <AttachIcon />, off: true }],
];

function ItemToolbar() {
  return (
    <div className="mt-4 flex gap-[11px] pl-[30px]">
      {itemActions.map((group, g) => (
        <div key={g} className="flex gap-px">
          {group.map((a) => (
            <button
              key={a.label}
              type="button"
              aria-label={a.label}
              disabled={a.off}
              className={`${a.off ? yellowFaded : yellow} h-7 w-[29px]`}
            >
              {a.icon}
            </button>
          ))}
        </div>
      ))}
      <button type="button" className={`${yellow} ml-[100px] h-7 w-[159px]`}>Default Values</button>
      <button type="button" className={`${yellow} h-7 w-[179px]`}>Addl Planning</button>
    </div>
  );
}

function SplitHandle() {
  return (
    <div className="flex w-2 shrink-0 flex-col items-start justify-center gap-1 bg-[#dbe5eb] pl-px pt-[72px]">
      {[0, 1, 2, 3, 4].map((i) => (
        <span key={i} className="size-1 bg-[#93a3b3] shadow-[1px_1px_0_#fff]" />
      ))}
    </div>
  );
}

export default function App() {
  return (
    <div className="relative flex min-h-screen flex-col overflow-hidden bg-white font-['Noto_Sans','Noto_Sans_CJK_KR',sans-serif] text-[14px] leading-5 text-black">
      <MenuBar />
      <SystemToolbar />
      <main className="flex flex-1 flex-col bg-linear-to-r from-white via-[#fdfdff] to-[#f6f9fc] pl-3 pr-[5px] pt-2.5">
        <div className="flex flex-1 flex-col border-x border-[#c3cedb] bg-[#e8eff6]">
          <TitleBar />
          <AppToolbar />
          <div className="flex flex-1">
            <OverviewPane />
            <SplitHandle />
            <section className="min-w-0 flex-1 pb-5 pl-1 pt-2.5">
              <DocumentHeader />
              <div className="mt-0.5 flex gap-px pr-3">
                <button type="button" aria-label="Header" className={`${yellow} h-7 w-[29px] shrink-0`}><ExpandIcon /></button>
                <OrgDataPanel />
              </div>
              <div className="mt-1.5 flex">
                <button type="button" aria-label="Item overview" className={`${yellow} mt-px h-7 w-[29px] shrink-0`}><ExpandIcon /></button>
                <ItemTable />
              </div>
              <ItemToolbar />
            </section>
          </div>
        </div>
      </main>
      <WindowControls />
      <p className="pointer-events-none absolute -bottom-6 right-[52px] text-[26px] leading-7 text-[#a4a8ac]">정품 인증</p>
    </div>
  );
}
